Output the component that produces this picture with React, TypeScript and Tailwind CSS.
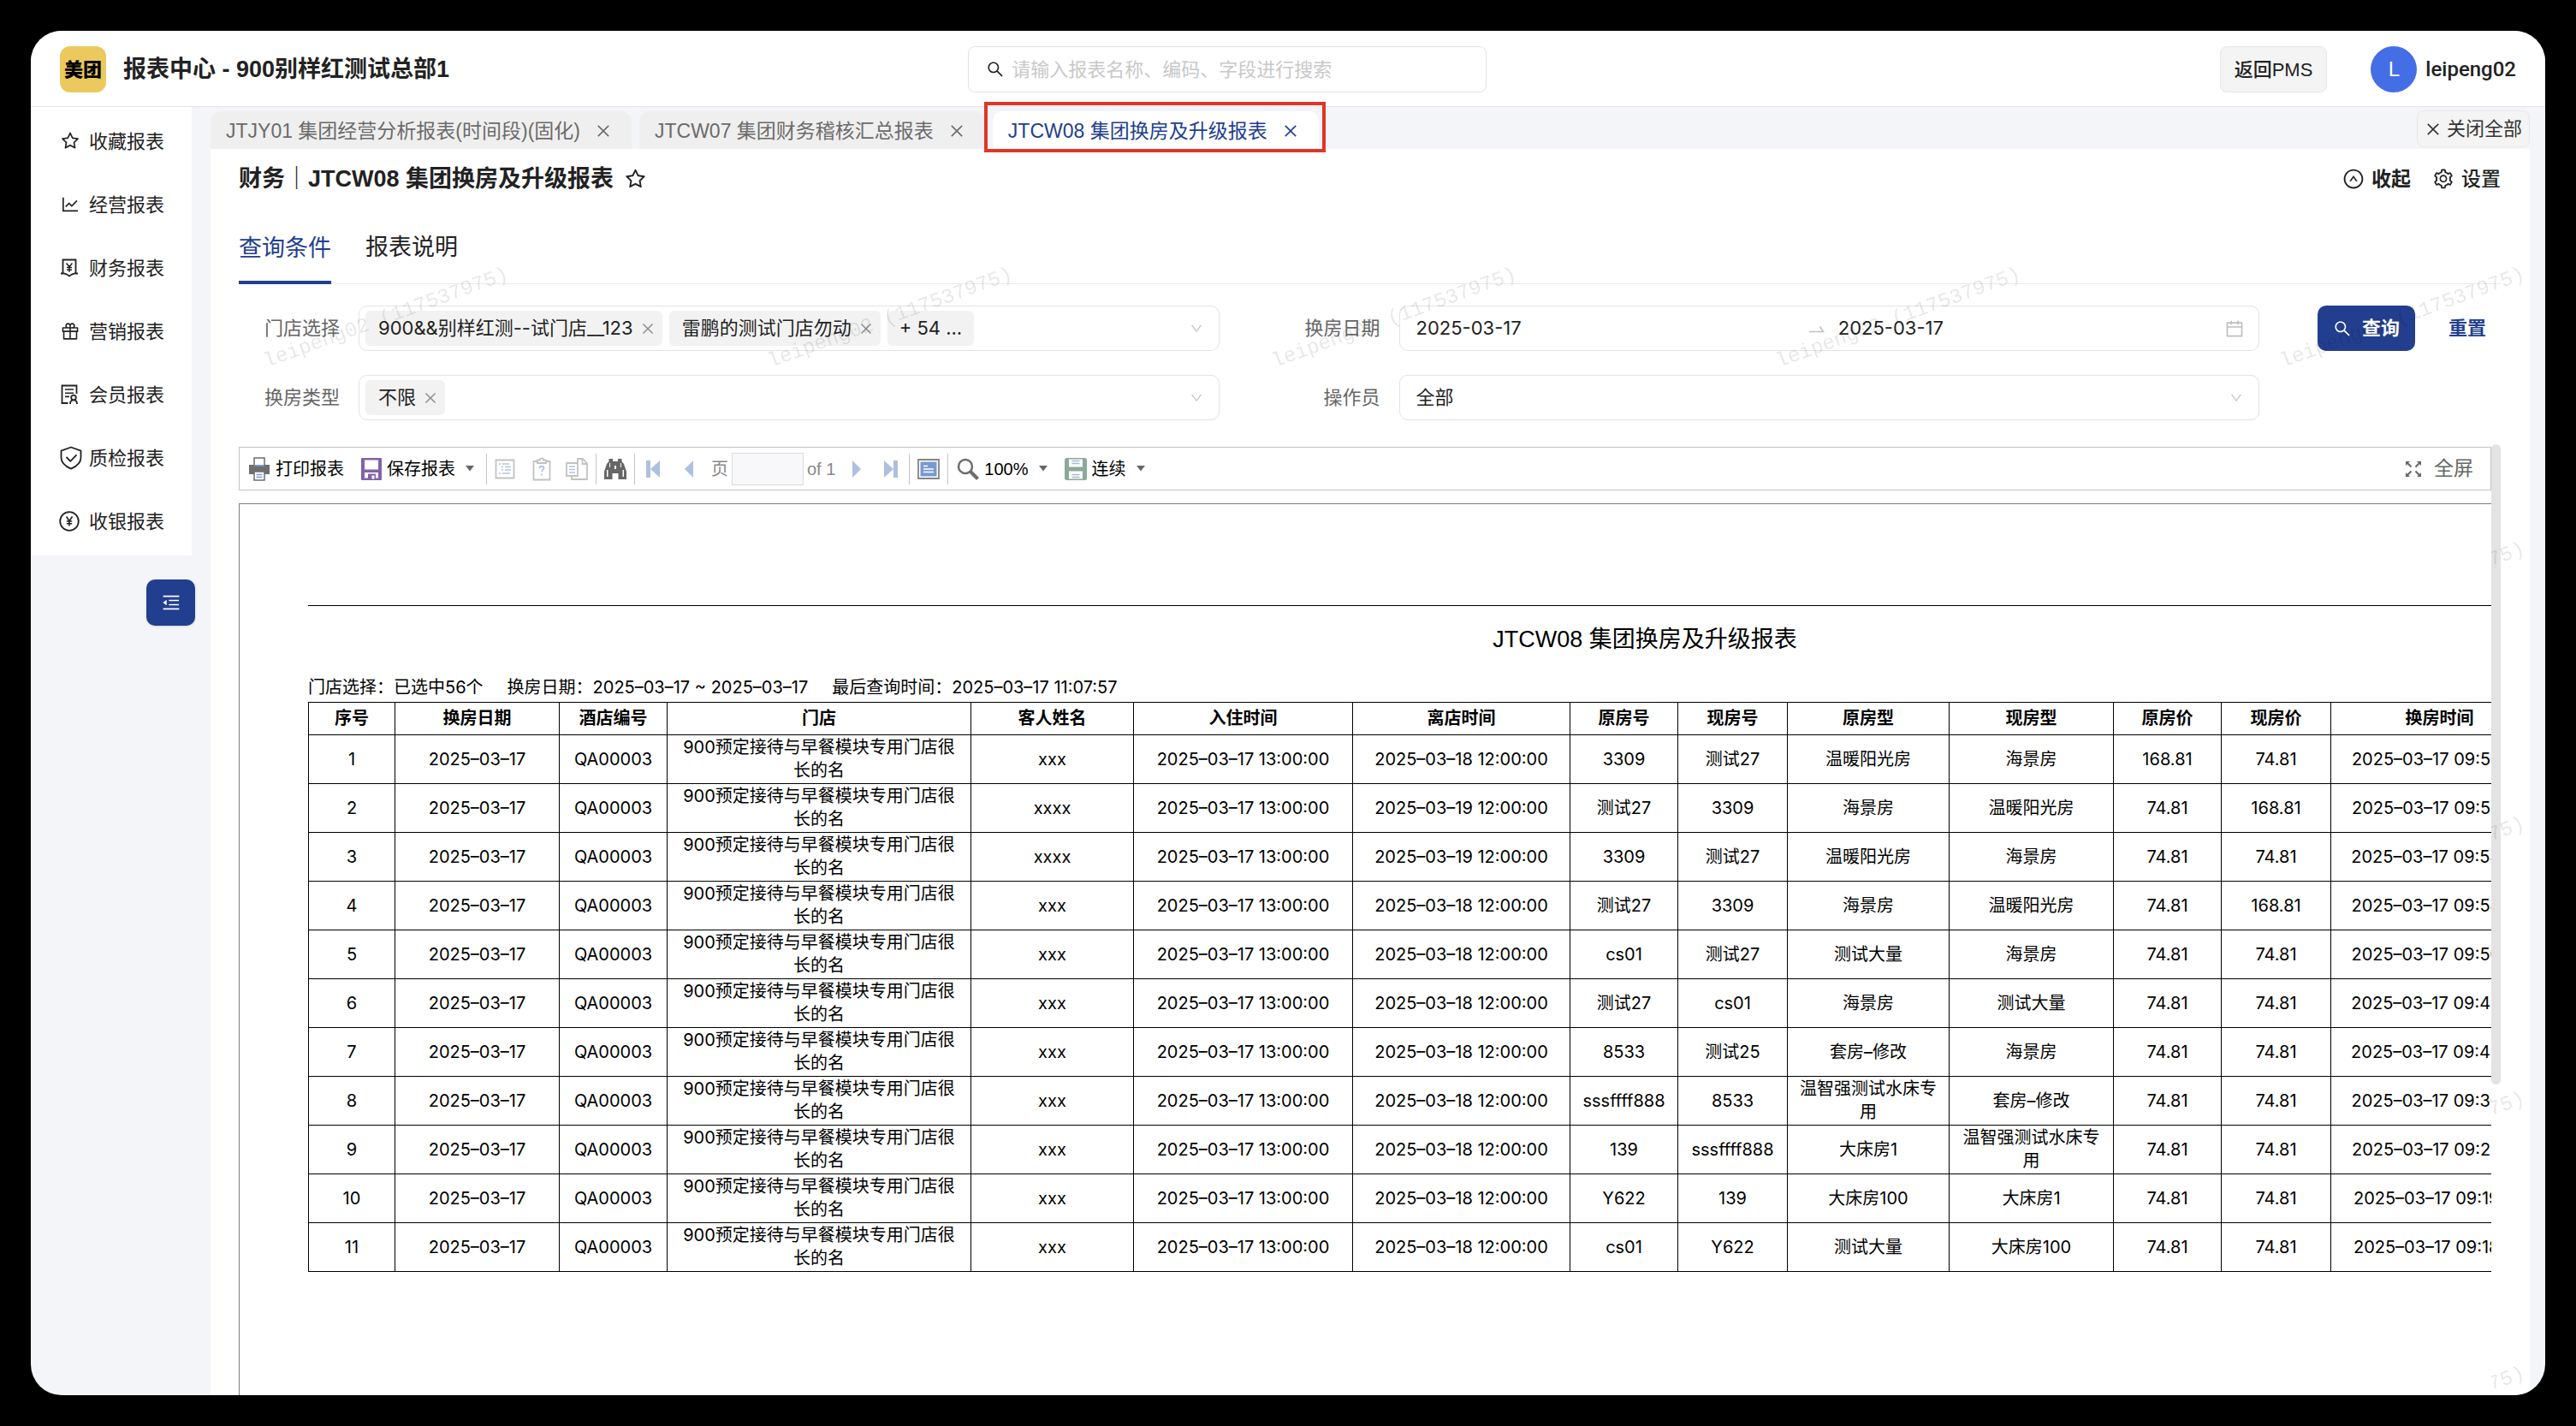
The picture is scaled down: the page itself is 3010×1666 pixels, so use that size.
import type { ReactNode } from "react";
import { clsx } from "clsx";
import {
  AiOutlineCalendar,
  AiOutlineClose,
  AiOutlineDown,
  AiOutlineGift,
  AiOutlineLineChart,
  AiOutlineMenuFold,
  AiOutlineSearch,
  AiOutlineSetting,
  AiOutlineStar,
  AiOutlineUpCircle,
} from "react-icons/ai";

const TABS = [
  { title: "JTJY01 集团经营分析报表(时间段)(固化)", active: false },
  { title: "JTCW07 集团财务稽核汇总报表", active: false },
  { title: "JTCW08 集团换房及升级报表", active: true },
];

const COLUMNS = [
  { title: "序号", width: "w-[101px]" },
  { title: "换房日期", width: "w-[192px]" },
  { title: "酒店编号", width: "w-[126px]" },
  { title: "门店", width: "w-[355px]" },
  { title: "客人姓名", width: "w-[190px]" },
  { title: "入住时间", width: "w-[256px]" },
  { title: "离店时间", width: "w-[254px]" },
  { title: "原房号", width: "w-[126px]" },
  { title: "现房号", width: "w-[128px]" },
  { title: "原房型", width: "w-[189px]" },
  { title: "现房型", width: "w-[192px]" },
  { title: "原房价", width: "w-[126px]" },
  { title: "现房价", width: "w-[128px]" },
  { title: "换房时间", width: "w-[254px]" },
];

// guest, check-out day, old room, new room, old type, new type, old price, new price, changed at
const ROWS = [
  ["xxx", "18", "3309", "测试27", "温暖阳光房", "海景房", "168.81", "74.81", "09:56:20"],
  ["xxxx", "19", "测试27", "3309", "海景房", "温暖阳光房", "74.81", "168.81", "09:55:20"],
  ["xxxx", "19", "3309", "测试27", "温暖阳光房", "海景房", "74.81", "74.81", "09:54:40"],
  ["xxx", "18", "测试27", "3309", "海景房", "温暖阳光房", "74.81", "168.81", "09:54:00"],
  ["xxx", "18", "cs01", "测试27", "测试大量", "海景房", "74.81", "74.81", "09:50:40"],
  ["xxx", "18", "测试27", "cs01", "海景房", "测试大量", "74.81", "74.81", "09:49:40"],
  ["xxx", "18", "8533", "测试25", "套房–修改", "海景房", "74.81", "74.81", "09:44:00"],
  ["xxx", "18", "sssffff888", "8533", "温智强测试水床专用", "套房–修改", "74.81", "74.81", "09:36:40"],
  ["xxx", "18", "139", "sssffff888", "大床房1", "温智强测试水床专用", "74.81", "74.81", "09:25:20"],
  ["xxx", "18", "Y622", "139", "大床房100", "大床房1", "74.81", "74.81", "09:19:20"],
  ["xxx", "18", "cs01", "Y622", "测试大量", "大床房100", "74.81", "74.81", "09:18:20"],
];

function FinanceIcon() {
  return (
    <svg viewBox="0 0 22 22" className="size-[22px]" fill="none" stroke="currentColor" strokeWidth="1.8">
      <path d="M3.5 1.5h15v15.6l-4 1.2-3.5 2.2-3.5-2.2-4-1.2z" />
      <path d="M1 17.5h3M18 17.5h3" />
      <path d="M7.6 5.5l3.4 4.3 3.4-4.3M11 9.8v6M8 10.5h6M8 13.2h6" strokeWidth="1.5" />
    </svg>
  );
}

function MemberIcon() {
  return (
    <svg viewBox="0 0 22 24" className="h-6 w-[22px]" fill="none" stroke="currentColor" strokeWidth="1.8">
      <path d="M19.5 11V1.5h-17v20.5h7" />
      <path d="M6 6h10M6 10.2h10M6 14.4h5" strokeWidth="1.6" />
      <circle cx="16" cy="15.5" r="2.8" />
      <path d="M12 23c0-2.8 1.4-4.6 4-4.6s4 1.8 4 4.6" />
    </svg>
  );
}

function ShieldIcon() {
  return (
    <svg viewBox="0 0 26 28" className="-mr-1 h-7 w-[26px]" fill="none" stroke="currentColor" strokeWidth="1.8" strokeLinejoin="round">
      <path d="M13 1.5l11.5 4.2v7.8c0 6-4.5 10.2-11.5 13.2C6 23.7 1.5 19.5 1.5 13.5V5.7z" />
      <path d="M7.5 13l4.8 4.8 7.2-7.4" />
    </svg>
  );
}

function CashierIcon() {
  return (
    <svg viewBox="0 0 24 24" className="-ml-px size-6" fill="none" stroke="currentColor" strokeWidth="1.8">
      <circle cx="12" cy="12" r="10.8" />
      <path d="M8.5 6.5l3.5 5 3.5-5M12 11.5v6M8.8 12h6.4M8.8 14.8h6.4" strokeWidth="1.6" />
    </svg>
  );
}

const MENU: { label: string; icon: ReactNode }[] = [
  { label: "收藏报表", icon: <AiOutlineStar className="size-6" /> },
  { label: "经营报表", icon: <AiOutlineLineChart className="size-6" /> },
  { label: "财务报表", icon: <FinanceIcon /> },
  { label: "营销报表", icon: <AiOutlineGift className="size-6" /> },
  { label: "会员报表", icon: <MemberIcon /> },
  { label: "质检报表", icon: <ShieldIcon /> },
  { label: "收银报表", icon: <CashierIcon /> },
];

function Header() {
  return (
    <header className="grid h-[89px] shrink-0 grid-cols-[15fr_606px_17fr] items-center border-b border-[#e3e4e6] bg-white px-[34px] pt-0.5">
      <div className="flex items-center gap-5">
        <div className="flex size-[54px] items-center justify-center rounded-xl bg-[#ecc95d] text-[22px] font-black text-black">
          美团
        </div>
        <h1 className="text-[27px] font-bold text-[#222]">报表中心 - 900别样红测试总部1</h1>
      </div>
      <label className="flex h-[54px] items-center gap-2 rounded-lg border border-[#e3e3e3] px-5 text-[22px]">
        <AiOutlineSearch className="size-[22px] text-[#222]" />
        <input
          type="search"
          aria-label="搜索报表"
          placeholder="请输入报表名称、编码、字段进行搜索"
          className="min-w-0 flex-1 outline-none placeholder:text-[#c8c8c8]"
        />
      </label>
      <div className="flex items-center justify-end">
        <button className="h-[54px] rounded-lg border border-[#e6e6e6] bg-[#f4f4f4] px-4 text-[22px] font-medium text-[#222]">
          返回PMS
        </button>
        <div className="ml-[51px] flex size-[54px] items-center justify-center rounded-full bg-[#446ee6] text-2xl text-white">
          L
        </div>
        <span className="ml-2.5 text-2xl font-medium text-[#222] [font-family:Roboto,sans-serif]">leipeng02</span>
      </div>
    </header>
  );
}

function Sidebar() {
  return (
    <aside className="w-[188px] shrink-0">
      <nav className="bg-white py-[3px]">
        {MENU.map((item) => (
          <a key={item.label} href="#" className="flex h-[74px] items-center pl-[34px] text-[22px] text-[#222]">
            <span className="mr-2.5 flex w-6 shrink-0 items-center">{item.icon}</span>
            {item.label}
          </a>
        ))}
      </nav>
      <button
        aria-label="收起菜单"
        className="relative z-10 mt-7 ml-[135px] flex h-[54px] w-[57px] items-center justify-center rounded-[10px] bg-[#223e8f] text-white shadow-sm"
      >
        <AiOutlineMenuFold className="size-6" />
      </button>
    </aside>
  );
}

function TabBar() {
  return (
    <div className="flex h-[49px] items-end gap-[9px]">
      {TABS.map((tab) => (
        <div
          key={tab.title}
          className={clsx(
            "relative flex h-11 items-center gap-[17px] rounded-t-xl pt-0.5 pr-[23px] pl-[18px] text-[23px]",
            tab.active ? "bg-white text-[#223e8f]" : "bg-[#efefef] text-[#6b6b6b]"
          )}
        >
          <a href="#" className="whitespace-nowrap">{tab.title}</a>
          <button aria-label={`关闭 ${tab.title}`}>
            <AiOutlineClose className="size-5" />
          </button>
          {tab.active && (
            <span className="pointer-events-none absolute -top-[11px] -right-2 -bottom-1 -left-2.5 z-30 border-4 border-[#e03526]" />
          )}
        </div>
      ))}
      <button className="mb-0.5 ml-auto flex h-[43px] items-center gap-1.5 rounded-lg border border-[#e8e8e8] bg-[#f4f4f4] px-2 text-[22px] text-[#333]">
        <AiOutlineClose className="size-5" />
        关闭全部
      </button>
    </div>
  );
}

function Tag({ children }: { children: ReactNode }) {
  return (
    <span className="flex h-[41px] items-center gap-2 rounded-md bg-[#f2f2f2] pr-2 pl-[15px] whitespace-nowrap">
      {children}
      <button aria-label={`移除 ${children}`}>
        <AiOutlineClose className="size-[18px] text-[#8c8c8c]" />
      </button>
    </span>
  );
}

const BOX = "flex h-[53px] min-w-0 items-center rounded-[10px] border border-[#e3e3e3] text-[22px] text-[#222]";
const LABEL = "pr-[22px] text-right text-[22px] text-[#666]";

function QueryForm() {
  return (
    <form
      className="grid grid-cols-[140px_1fr_210px_1fr_282px] items-center gap-y-7 pt-[25px] [font-family:Inter,'Noto_Sans_CJK_SC',sans-serif]"
      onSubmit={(e) => e.preventDefault()}
    >
      <label htmlFor="store" className={LABEL}>门店选择</label>
      <div className={clsx(BOX, "gap-2 pr-[18px] pl-[7px]")}>
        <Tag>900&&别样红测--试门店__123</Tag>
        <Tag>雷鹏的测试门店勿动</Tag>
        <span className="flex h-[41px] items-center rounded-md bg-[#f2f2f2] px-3.5 whitespace-nowrap">+ 54 ...</span>
        <input id="store" className="min-w-0 flex-1 outline-none" />
        <AiOutlineDown className="size-4 text-[#c4c4c4]" />
      </div>
      <label htmlFor="from" className={LABEL}>换房日期</label>
      <div className={clsx(BOX, "gap-4 pr-4 pl-[19px]")}>
        <input id="from" defaultValue="2025-03-17" className="w-0 min-w-0 flex-1 outline-none" />
        <svg viewBox="0 0 18 12" className="h-3 w-[18px] shrink-0" fill="none" stroke="#bfbfbf" strokeWidth="1.5">
          <path d="M0 9.5h16.5L12.5 3.5" />
        </svg>
        <input aria-label="换房日期止" defaultValue="2025-03-17" className="w-0 min-w-0 flex-1 outline-none" />
        <AiOutlineCalendar className="-ml-2 size-6 text-[#bfbfbf]" />
      </div>
      <div className="flex items-center pl-[68px] text-[22px]">
        <button className="flex h-[53px] items-center gap-3 rounded-[10px] bg-[#223e8f] px-[18px] font-bold text-white">
          <AiOutlineSearch className="size-[22px]" />
          查询
        </button>
        <button type="reset" className="ml-[39px] font-bold text-[#223e8f]">重置</button>
      </div>

      <label htmlFor="kind" className={LABEL}>换房类型</label>
      <div className={clsx(BOX, "gap-2 pr-[18px] pl-[7px]")}>
        <Tag>不限</Tag>
        <input id="kind" className="min-w-0 flex-1 outline-none" />
        <AiOutlineDown className="size-4 text-[#c4c4c4]" />
      </div>
      <label htmlFor="operator" className={LABEL}>操作员</label>
      <div className={clsx(BOX, "pr-[18px] pl-[19px]")}>
        <select id="operator" className="min-w-0 flex-1 appearance-none outline-none">
          <option>全部</option>
        </select>
        <AiOutlineDown className="size-4 text-[#c4c4c4]" />
      </div>
    </form>
  );
}

function PrinterIcon() {
  return (
    <svg viewBox="0 0 26 28" className="h-7 w-[26px]">
      <path d="M1 9h24v11H1z" fill="#6e6e6e" />
      <path d="M7 1h12v9H7z" fill="#fff" stroke="#6e6e6e" strokeWidth="1.5" />
      <path d="M7 10h12" stroke="#7d9bd0" strokeWidth="1.5" />
      <path d="M7 17h12v10H7z" fill="#fff" stroke="#6e6e6e" strokeWidth="1.5" />
      <path d="M9.5 20.5h7M9.5 23.5h7" stroke="#7d9bd0" strokeWidth="1.5" />
    </svg>
  );
}

function SaveIcon() {
  return (
    <svg viewBox="0 0 24 26" className="h-[26px] w-6">
      <rect width="24" height="26" rx="1" fill="#8262a8" />
      <path d="M4 2.500h16v11H4z" fill="#fff" />
      <path d="M4 17h16v6.500H4z" fill="#fff" />
      <path d="M8 18.500h9v7H8z" fill="#8262a8" />
      <path d="M12.500 20.500h3v4h-3z" fill="#fff" />
    </svg>
  );
}

function OutlineIcon() {
  return (
    <svg viewBox="0 0 24 24" className="size-6" fill="none">
      <path d="M1.5 1.5h21v21h-21z" stroke="#c2c2c2" strokeWidth="1.8" />
      <path d="M5 6h2M9 6h8M8 9.5h2M12 9.5h7M8 13h2M12 13h7M5 17h2M9 17h9" stroke="#b4c1e2" strokeWidth="1.5" />
    </svg>
  );
}

function ClipboardIcon() {
  return (
    <svg viewBox="0 0 22 28" className="h-7 w-[22px]" fill="none" stroke="#c2c2c2" strokeWidth="1.8">
      <path d="M1.5 5h19v21.5h-19z" />
      <path d="M6 5V3.5h3c0-2.8 4-2.8 4 0h3V7H6z" fill="#fff" />
      <path d="M8.5 13c0-3 5-3 5 0 0 1.8-2.5 2-2.5 4.5M11 19.5v2" stroke="#b4c1e2" />
    </svg>
  );
}

function CopyIcon() {
  return (
    <svg viewBox="0 0 26 28" className="h-7 w-[26px]" fill="none" stroke="#c2c2c2" strokeWidth="1.8">
      <path d="M14 7V2h6l5 5.5V26H7v-4" />
      <path d="M19.5 2v6H25" />
      <path d="M1 7h13v15H1z" fill="#fff" />
      <path d="M4 11h7M4 14.5h7M4 18h7" stroke="#b4c1e2" strokeWidth="1.5" />
    </svg>
  );
}

function BinocularsIcon() {
  return (
    <svg viewBox="0 0 26 24" className="h-6 w-[26px]" fill="#666">
      <path d="M5.5 0h4.5v3h6V0h4.5v3l2.5 3 3 9v9h-9.5v-7h-7v7H0v-9l3-9 2.5-3z" />
      <path d="M3 13h1.5v8H3zM6 5h1v5H6zM21.5 13H23v8h-1.5zM19 5h1v5h-1zM12 8h2v4h-2z" fill="#fff" />
    </svg>
  );
}

function SinglePageIcon() {
  return (
    <svg viewBox="0 0 26 24" className="h-6 w-[26px]">
      <path d="M1 1h24v22H1z" fill="#fff" stroke="#858585" strokeWidth="1.8" />
      <path d="M3.5 3.5h19v17h-19z" fill="#789ad0" />
      <path d="M7 8.500h5M7 12h12M7 15.500h12" stroke="#fff" strokeWidth="1.5" />
    </svg>
  );
}

function ContinuousIcon() {
  return (
    <svg viewBox="0 0 26 26" className="size-[26px]">
      <rect width="26" height="26" rx="2.5" fill="#8aa99a" />
      <path d="M5 1.5h16v9H5zM5 15.500h16v9H5z" fill="#fff" />
      <path d="M8.5 3.500h9M8.500 6.500h9M8.500 19.500h9M8.500 22.500h9" stroke="#aab7cf" strokeWidth="1.5" />
    </svg>
  );
}

function Arrow({ back, bar }: { back?: boolean; bar?: boolean }) {
  return (
    <svg viewBox="0 0 18 20" className={clsx("h-5 w-[18px]", back && "rotate-180")} fill="#adc0df">
      <path d={bar ? "M1 0l11 10L1 20zM12 0h5v20h-5z" : "M4 0l10 10L4 20z"} />
    </svg>
  );
}

function Caret() {
  return (
    <svg viewBox="0 0 10 7" className="h-[7px] w-2.5" fill="#666">
      <path d="M0 0h10L5 6.5z" />
    </svg>
  );
}

function Divider() {
  return <span className="h-9 w-px shrink-0 bg-[#c6c6c6]" />;
}

function Toolbar() {
  return (
    <div className="flex h-[51px] shrink-0 items-center border border-[#c4c4c4] bg-white pr-5 pl-2.5 text-[20px] whitespace-nowrap text-black">
      <button className="flex items-center gap-1.5"><PrinterIcon />打印报表</button>
      <button className="ml-5 flex items-center gap-1.5">
        <SaveIcon />保存报表<span className="ml-1.5"><Caret /></span>
      </button>
      <div className="ml-3.5 flex items-center gap-[9px]">
        <Divider />
        <button aria-label="目录" className="mr-[11px]"><OutlineIcon /></button>
        <button aria-label="参数" className="mr-2"><ClipboardIcon /></button>
        <button aria-label="复制"><CopyIcon /></button>
        <Divider />
        <button aria-label="查找"><BinocularsIcon /></button>
        <Divider />
      </div>
      <div className="ml-3 flex items-center text-[#888]">
        <button aria-label="首页"><Arrow back bar /></button>
        <button aria-label="上一页" className="ml-6"><Arrow back /></button>
        <label htmlFor="page" className="ml-[17px]">页</label>
        <input id="page" className="mx-1 h-[38px] w-[84px] border border-[#dcdcdc] bg-[#f8f8fb] px-2" />
        <span>of 1</span>
        <button aria-label="下一页" className="ml-4"><Arrow /></button>
        <button aria-label="末页" className="ml-[22px]"><Arrow bar /></button>
      </div>
      <div className="ml-3 flex items-center gap-[9px]">
        <Divider />
        <button aria-label="单页"><SinglePageIcon /></button>
        <Divider />
      </div>
      <button className="ml-2.5 flex items-center">
        <svg viewBox="0 0 26 26" className="size-[26px]" fill="none" stroke="#6e6e6e">
          <circle cx="10" cy="10" r="8" strokeWidth="2.5" />
          <path d="M16 16l8.5 8.5" strokeWidth="4" />
        </svg>
        <span className="mr-3 ml-1.5">100%</span>
        <Caret />
      </button>
      <button className="ml-5 flex items-center">
        <ContinuousIcon />
        <span className="mr-3 ml-1.5">连续</span>
        <Caret />
      </button>
      <button className="ml-auto flex items-center gap-3.5 text-[23px] text-[#666]">
        <svg viewBox="0 0 20 20" className="size-5" fill="#666" stroke="#666" strokeWidth="2">
          <path d="M1 1h5L1 6zM19 1v5l-5-5zM1 19v-5l5 5zM19 19h-5l5-5z" strokeWidth="0" />
          <path d="M2.5 2.5l5 5M17.5 2.5l-5 5M2.5 17.5l5-5M17.5 17.5l-5-5" />
        </svg>
        全屏
      </button>
    </div>
  );
}

function ReportTable() {
  return (
    <table className="w-[2617px] table-fixed border-collapse text-center text-[20px] leading-[27px]">
      <thead>
        <tr className="h-[38px]">
          {COLUMNS.map((col) => (
            <th key={col.title} className={clsx("border border-black p-0 font-bold", col.width)}>{col.title}</th>
          ))}
        </tr>
      </thead>
      <tbody>
        {ROWS.map(([guest, day, oldRoom, newRoom, oldType, newType, oldPrice, newPrice, time], i) => (
          <tr key={i} className="h-[57px]">
            {[
              i + 1,
              "2025–03–17",
              "QA00003",
              "900预定接待与早餐模块专用门店很长的名",
              guest,
              "2025–03–17 13:00:00",
              `2025–03–${day} 12:00:00`,
              oldRoom,
              newRoom,
              oldType,
              newType,
              oldPrice,
              newPrice,
              `2025–03–17 ${time}`,
            ].map((cell, j) => (
              <td key={j} className={clsx("border border-black py-0", j === 3 || j === 9 || j === 10 ? "px-3" : "px-0")}>
                {cell}
              </td>
            ))}
          </tr>
        ))}
      </tbody>
    </table>
  );
}

function Report() {
  return (
    <div className="mt-[15px] flex-1 overflow-hidden border-t border-l border-[#808080] bg-white pt-[118px] pl-20 text-black">
      <div className="w-[3124px] border-t border-black">
        <h3 className="mt-[21px] text-center text-[27px] leading-9">JTCW08 集团换房及升级报表</h3>
        <div className="[font-family:Inter,'Noto_Sans_CJK_SC',sans-serif]">
          <p className="mt-[25px] mb-[3px] flex gap-7 text-[20px] leading-[27px]">
            <span>门店选择：已选中56个</span>
            <span>换房日期：2025–03–17 ~ 2025–03–17</span>
            <span>最后查询时间：2025–03–17 11:07:57</span>
          </p>
          <ReportTable />
        </div>
      </div>
    </div>
  );
}

const MARK = "w-[302px] shrink-0 -rotate-20 font-['Liberation_Mono'] text-2xl leading-6 whitespace-nowrap text-black/10";

// one full row over the query form, then one mark per row along the right edge
function Watermarks() {
  return (
    <div aria-hidden="true" className="pointer-events-none absolute inset-0 z-10 overflow-hidden">
      <div className="absolute top-[186px] right-[-2px] flex flex-col items-end gap-[297px]">
        {[5, 1, 1, 1, 1].map((count, row) => (
          <div key={row} className="flex gap-[287px]">
            {Array.from({ length: count }, (_, i) => (
              <span key={i} className={MARK}>leipeng02 (117537975)</span>
            ))}
          </div>
        ))}
      </div>
    </div>
  );
}

export default function App() {
  return (
    <div className="h-screen bg-black p-9 [font-family:'Liberation_Sans','Noto_Sans_CJK_SC',sans-serif]">
      <div className="flex h-full flex-col overflow-hidden rounded-[36px] bg-[#f3f5f9]">
        <Header />
        <div className="flex min-h-0 flex-1">
          <Sidebar />
          <div className="mr-[18px] ml-[22px] flex min-w-0 flex-1 flex-col">
            <TabBar />
            <main className="relative flex min-h-0 flex-1 flex-col bg-white pr-[34px] pl-[33px]">
              <Watermarks />
              <div className="flex items-center pt-[17px] text-[#222]">
                <h2 className="text-[27px] leading-9 font-bold">财务｜JTCW08 集团换房及升级报表</h2>
                <button aria-label="收藏" className="ml-3"><AiOutlineStar className="size-[27px]" /></button>
                <button className="ml-auto flex items-center gap-2 text-[23px] font-bold">
                  <AiOutlineUpCircle className="size-[26px]" />收起
                </button>
                <button className="ml-[25px] flex items-center gap-2 text-[23px] font-medium">
                  <AiOutlineSetting className="size-[26px]" />设置
                </button>
              </div>
              <div role="tablist" className="mt-11 flex gap-10 border-b border-[#ebebeb] text-[27px] leading-9">
                <button role="tab" aria-selected="true" className="-mb-px border-b-4 border-[#223e8f] pb-5 text-[#223e8f]">
                  查询条件
                </button>
                <button role="tab" aria-selected="false" className="pb-6 text-[#222]">报表说明</button>
              </div>
              <QueryForm />
              <div className="mt-7 flex min-h-0 flex-1">
                <div className="relative z-20 flex min-w-0 flex-1 flex-col pt-[3px]">
                  <Toolbar />
                  <Report />
                </div>
                <div className="h-[748px] w-[11px] shrink-0 rounded-full bg-[#e3e3e3]" />
              </div>
            </main>
          </div>
        </div>
      </div>
    </div>
  );
}
